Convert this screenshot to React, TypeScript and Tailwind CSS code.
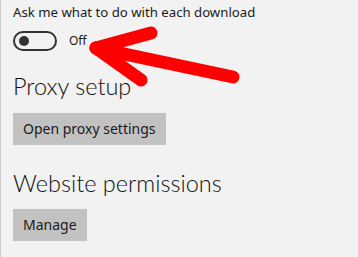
import React from "react";

export default function App() {
  return (
    <div
      className="relative w-[358px] h-[257px] overflow-hidden bg-[#f2f2f2] border-l border-[#cdcdcd] text-[#1a1a1a]"
      style={{ fontFamily: '"Noto Sans", "Open Sans", sans-serif' }}
    >
      <div className="pl-[12px]">
        <p className="text-[13.2px] leading-[20px] mt-[2px]">Ask me what to do with each download</p>
        <div className="flex items-center mt-[9px] h-[20px]">
          <div className="w-[44px] h-[20px] rounded-full border-2 border-[#333] flex items-center pl-[4px]">
            <div className="w-[10px] h-[10px] rounded-full bg-[#333]" />
          </div>
          <span className="ml-[12px] text-[12px] leading-[16px]">Off</span>
        </div>
        <h2
          className="text-[23.5px] font-light leading-[32px] mt-[19px] text-[#111]"
          style={{ fontFamily: 'Lato, "Noto Sans", sans-serif' }}
        >
          Proxy setup
        </h2>
        <button className="mt-[11px] h-[32px] px-[10px] bg-[#c2c2c2] text-[14px] leading-[20px]">
          Open proxy settings
        </button>
        <h2
          className="text-[23.5px] font-light leading-[32px] mt-[22px] text-[#111]"
          style={{ fontFamily: 'Lato, "Noto Sans", sans-serif' }}
        >
          Website permissions
        </h2>
        <button className="mt-[10px] h-[32px] px-[10px] bg-[#c2c2c2] text-[14px] leading-[20px]">
          Manage
        </button>
      </div>
      <svg className="absolute left-0 top-0" width="358" height="257" viewBox="0 0 358 257">
        <g stroke="#ff0000" strokeWidth="13" strokeLinecap="round" strokeLinejoin="round" fill="none">
          <line x1="95" y1="48" x2="232" y2="77" />
          <line x1="95" y1="48" x2="150" y2="33" />
          <line x1="95" y1="48" x2="140" y2="80" />
        </g>
      </svg>
    </div>
  );
}
